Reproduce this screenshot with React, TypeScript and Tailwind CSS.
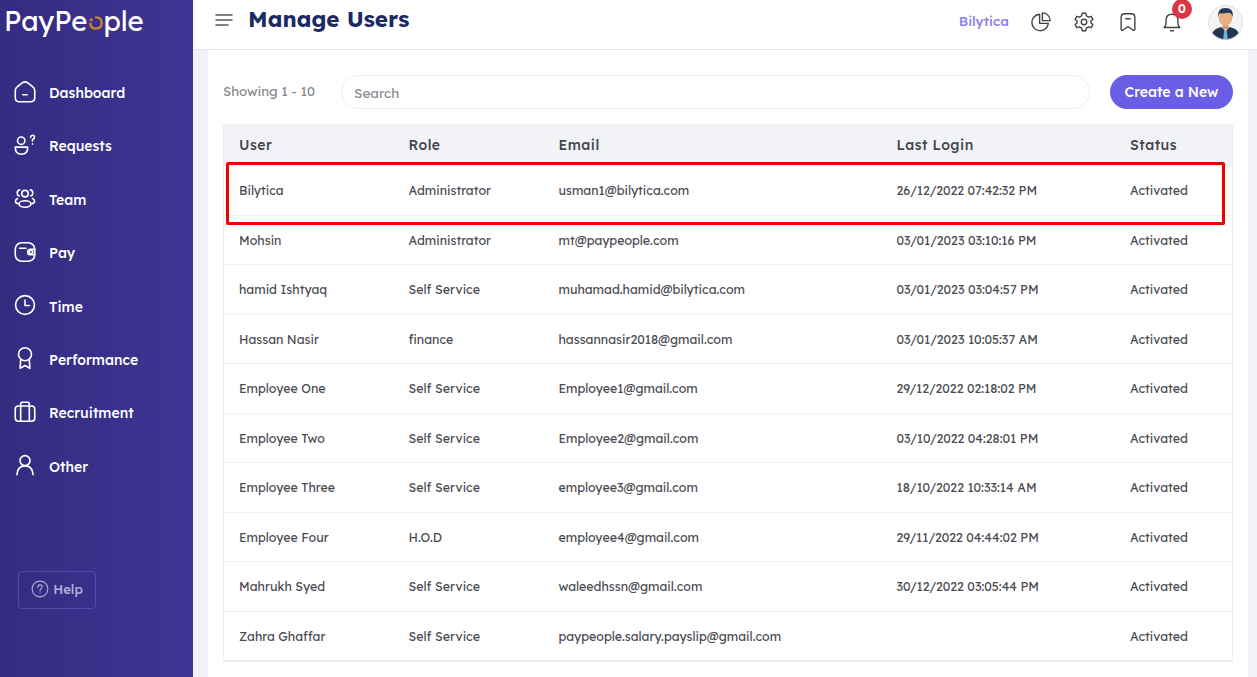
import React from 'react';

const font = { fontFamily: 'Lexend, Inter, "Noto Sans", sans-serif' };

const users = [
  ['Bilytica', 'Administrator', 'usman1@bilytica.com', '26/12/2022 07:42:32 PM'],
  ['Mohsin', 'Administrator', 'mt@paypeople.com', '03/01/2023 03:10:16 PM'],
  ['hamid Ishtyaq', 'Self Service', 'muhamad.hamid@bilytica.com', '03/01/2023 03:04:57 PM'],
  ['Hassan Nasir', 'finance', 'hassannasir2018@gmail.com', '03/01/2023 10:05:37 AM'],
  ['Employee One', 'Self Service', 'Employee1@gmail.com', '29/12/2022 02:18:02 PM'],
  ['Employee Two', 'Self Service', 'Employee2@gmail.com', '03/10/2022 04:28:01 PM'],
  ['Employee Three', 'Self Service', 'employee3@gmail.com', '18/10/2022 10:33:14 AM'],
  ['Employee Four', 'H.O.D', 'employee4@gmail.com', '29/11/2022 04:44:02 PM'],
  ['Mahrukh Syed', 'Self Service', 'waleedhssn@gmail.com', '30/12/2022 03:05:44 PM'],
  ['Zahra Ghaffar', 'Self Service', 'paypeople.salary.payslip@gmail.com', ''],
];

const stroke = { fill: 'none', stroke: 'currentColor', strokeWidth: 1.5, strokeLinecap: 'round', strokeLinejoin: 'round' } as const;

function Icon({ children, className = 'w-6 h-6' }: { children: React.ReactNode; className?: string }) {
  return (
    <svg viewBox="0 0 24 24" className={className} {...stroke}>
      {children}
    </svg>
  );
}

const navItems: [string, React.ReactNode][] = [
  ['Dashboard', <><path d="M3 10.5 Q3 8.5 5 7 L10 3.2 Q12 2 14 3.2 L19 7 Q21 8.5 21 10.5 V17 Q21 21 17 21 H7 Q3 21 3 17 Z" /><path d="M10 14.5 H14" /></>],
  ['Requests', <><circle cx="8.5" cy="8" r="3.4" /><path d="M3 14 H14.5 Q14.5 20.5 8.7 20.5 Q3 20.5 3 14 Z" /><path d="M17 5 Q17.5 2.8 19.3 3 Q21.2 3.4 20.6 5.4 Q20.2 6.5 18.9 7.2 V8.4" /><path d="M18.9 11 V11.2" /></>],
  ['Team', <><circle cx="12" cy="8" r="3" /><ellipse cx="12" cy="17.5" rx="5.5" ry="3" /><path d="M7 4.5 Q4.8 5 4.8 7.5 Q4.8 9.5 6.6 10" /><path d="M17 4.5 Q19.2 5 19.2 7.5 Q19.2 9.5 17.4 10" /><path d="M5 12.5 Q3 13.5 3.2 15.5 Q3.6 17 5.4 17.2" /><path d="M19 12.5 Q21 13.5 20.8 15.5 Q20.4 17 18.6 17.2" /></>],
  ['Pay', <><rect x="3" y="3.5" width="18" height="17" rx="6" /><path d="M7 8.5 H13" /><circle cx="17.5" cy="12" r="1.6" /><path d="M21 9.5 H17 Q14.5 9.5 14.5 12 Q14.5 14.5 17 14.5 H21" /></>],
  ['Time', <><circle cx="12" cy="12" r="8.7" /><path d="M12 7.5 V12.5 H16" /></>],
  ['Performance', <><circle cx="12" cy="8.5" r="6" /><path d="M8 14 L7.5 21.5 L12 19 L16.5 21.5 L16 14" /></>],
  ['Recruitment', <><rect x="3" y="6.5" width="18" height="14" rx="3" /><path d="M8 6.5 V20.5 M16 6.5 V20.5" /><path d="M8 6.5 V4.5 Q8 3 9.5 3 H14.5 Q16 3 16 4.5 V6.5" /></>],
  ['Other', <><circle cx="12" cy="8" r="4.6" /><path d="M4.5 21 Q5 12.8 12 12.8 Q19 12.8 19.5 21" /></>],
];

function Sidebar() {
  return (
    <aside className="w-[193px] h-full shrink-0 flex flex-col bg-gradient-to-r from-[#352b80] to-[#3e3595] text-white">
      <div className="h-[41px] pl-[4px] flex items-center text-[27.5px] leading-none" style={{ fontFamily: 'Lexend, Inter, sans-serif' }}>
        <span>PayPe</span>
        <svg viewBox="0 0 20 20" className="w-[16px] h-[16px] mt-[4px]" fill="none" stroke="#d0812a" strokeWidth="3" strokeLinecap="round">
          <circle cx="4" cy="6" r="2" fill="#d0812a" stroke="none" />
          <path d="M10 3 Q17 3 17 10 Q17 17 10 17 Q3 17 3 11" />
        </svg>
        <span>ple</span>
      </div>
      <nav className="mt-[37.5px] flex flex-col gap-[23.4px] pl-[12px]">
        {navItems.map(([label, icon]) => (
          <div key={label} className="h-[30px] flex items-center gap-[11px] text-[14px] font-medium">
            <Icon className="w-[26px] h-[26px] shrink-0 mb-[4px]">{icon}</Icon>
            <span>{label}</span>
          </div>
        ))}
      </nav>
      <div className="mt-[88.5px] ml-[18px] w-[78px] h-[38px] rounded border border-[#5448ad] flex items-center justify-center gap-[4px] text-[#b5b0d6] text-[13px] font-medium">
        <svg viewBox="0 0 24 24" className="w-[18px] h-[18px] mb-[2px]" fill="none" stroke="currentColor" strokeWidth="1.4" strokeLinecap="round">
          <circle cx="12" cy="12" r="10.5" />
          <path d="M9 9.5 Q9 6.5 12 6.5 Q15 6.5 15 9 Q15 11 13 12 Q12 12.6 12 14.5" />
          <path d="M12 17.5 V17.7" />
        </svg>
        <span>Help</span>
      </div>
    </aside>
  );
}

function Header() {
  return (
    <header className="h-[50px] shrink-0 bg-white border-b border-[#e3e4ec] flex items-center pl-[22px] pr-[14px]">
      <svg viewBox="0 0 18 12" className="w-[18px] h-[12px] text-[#55565c] mb-[9px]" fill="none" stroke="currentColor" strokeWidth="1.5" strokeLinecap="round">
        <path d="M1 1 H17 M1 6 H17 M1 11 H13" />
      </svg>
      <h1 className="ml-[15px] text-[22.4px] font-bold text-[#1b2a63] leading-none mb-[11px]">Manage Users</h1>
      <div className="ml-auto flex items-center text-[#3f4145] mb-[4px]">
        <span className="text-[#8b7ff0] text-[13.6px] font-medium mr-[21px] mb-[2px]">Bilytica</span>
        <Icon className="w-[22px] h-[22px] mr-[21px] mb-[2px]">
          <path d="M10.5 3.5 A9 9 0 1 0 20 13.5 H10.5 Z" />
          <path d="M13.5 2 A8.5 8.5 0 0 1 22 10.5 H13.5 Z" />
        </Icon>
        <Icon className="w-[22px] h-[22px] mr-[22px] mb-[2px]">
          <circle cx="12" cy="12" r="3" />
          <path d="M10 2.5 H14 L14.6 5.3 L17 6.6 L19.7 5.8 L21.7 9.2 L19.6 11 V13 L21.7 14.8 L19.7 18.2 L17 17.4 L14.6 18.7 L14 21.5 H10 L9.4 18.7 L7 17.4 L4.3 18.2 L2.3 14.8 L4.4 13 V11 L2.3 9.2 L4.3 5.8 L7 6.6 L9.4 5.3 Z" />
        </Icon>
        <Icon className="w-[22px] h-[22px] mr-[22px] mb-[2px]">
          <path d="M4.5 7 Q4.5 3 8.5 3 H15.5 Q19.5 3 19.5 7 V19 Q19.5 22 17 20.5 L13.5 18 Q12 17 10.5 18 L7 20.5 Q4.5 22 4.5 19 Z" />
          <path d="M9.5 8.5 H14.5" />
        </Icon>
        <div className="relative mr-[25px] mb-[2px]">
          <Icon className="w-[22px] h-[22px]">
            <path d="M3.5 18 H20.5 Q18.5 16 18.5 13 V10 Q18.5 3.5 12 3.5 Q5.5 3.5 5.5 10 V13 Q5.5 16 3.5 18 Z" />
            <path d="M10.5 21.5 H13.5" />
          </Icon>
          <span className="absolute -top-[12px] left-[11px] w-[20px] h-[20px] rounded-full bg-[#dc3545] text-white text-[12px] font-semibold flex items-center justify-center">0</span>
        </div>
        <svg viewBox="0 0 36 36" className="w-[35px] h-[35px]">
          <defs>
            <clipPath id="av">
              <circle cx="18" cy="18" r="17.5" />
            </clipPath>
          </defs>
          <g clipPath="url(#av)">
            <rect width="36" height="36" fill="#f4f4f6" />
            <path d="M2 36 Q3 25 13 23 H23 Q33 25 34 36 Z" fill="#1f3550" />
            <path d="M14.5 23 L18 27 L21.5 23 Z" fill="#ffffff" />
            <path d="M16.7 26 H19.3 L20.5 36 H15.5 Z" fill="#6db3e0" />
            <rect x="15" y="18" width="6" height="7" fill="#d49a6a" />
            <ellipse cx="18" cy="13" rx="7" ry="8.5" fill="#e8b184" />
            <path d="M10.5 13 Q9 3 18 3 Q27 3 25.5 13 Q24.5 8 21 8 Q15 9 12 8.5 Q11 10 10.5 13 Z" fill="#233a58" />
          </g>
          <circle cx="18" cy="18" r="17.5" fill="none" stroke="#d4d5de" strokeWidth="0.7" />
        </svg>
      </div>
    </header>
  );
}

function UsersTable() {
  return (
    <div className="relative mt-[15px] border border-[#eeeff3] text-[12.4px] text-[#4a4b52]">
      <div className="grid grid-cols-[169.5px_150px_338px_233.5px_1fr] pl-[15px] h-[41.3px] items-center bg-[#f2f3f6] text-[14px] font-medium tracking-[0.5px] text-[#44454d]">
        <div>User</div>
        <div>Role</div>
        <div>Email</div>
        <div>Last Login</div>
        <div>Status</div>
      </div>
      {users.map((u) => (
        <div key={u[2]} className="grid grid-cols-[169.5px_150px_338px_233.5px_1fr] pl-[15px] pt-[1.6px] h-[49.5px] items-center border-b border-[#eeeff3] last:border-b-0">
          <div>{u[0]}</div>
          <div>{u[1]}</div>
          <div>{u[2]}</div>
          <div>{u[3]}</div>
          <div>Activated</div>
        </div>
      ))}
      <div className="absolute left-[2px] top-[37px] w-[999px] h-[63px] border-[3px] border-[#f00000] rounded-[2px] pointer-events-none" />
    </div>
  );
}

export default function App() {
  return (
    <div className="w-[1257px] h-[677px] overflow-hidden flex bg-[#f1f2f6]" style={font}>
      <Sidebar />
      <div className="flex-1 min-w-0 h-full flex flex-col">
        <Header />
        <main className="ml-[15px] mr-[9px] flex-1 bg-white px-[15px] pt-[25px]">
          <div className="flex items-center h-[34px]">
            <span className="w-[118px] shrink-0 text-[13.2px] text-[#85868c]">Showing 1 - 10</span>
            <div className="flex-1 h-[34px] rounded-full border border-[#eeeff3] px-[12px] pt-[2px] flex items-center text-[13.5px] text-[#8a8b91]">Search</div>
            <button className="ml-[20px] w-[123px] h-[34px] rounded-full bg-[#6b5ee6] text-white text-[14px] font-medium">Create a New</button>
          </div>
          <UsersTable />
        </main>
      </div>
    </div>
  );
}
